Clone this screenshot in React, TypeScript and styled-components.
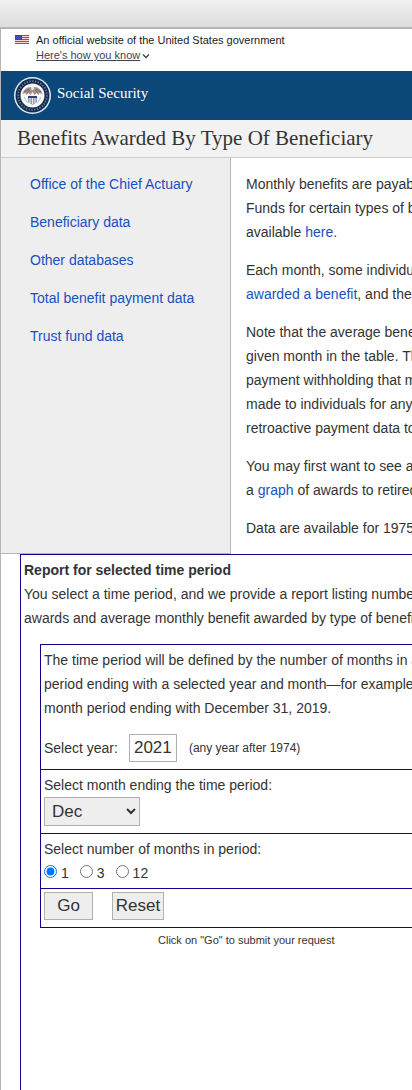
import React from "react";
import styled, { createGlobalStyle } from "styled-components";

const ink = "#333";
const rule = "#b5b5b5";
const navy = "#14008c";

const GlobalStyle = createGlobalStyle`
  *, *::before, *::after { box-sizing: border-box; }
  body {
    margin: 0;
    background: #fff;
    color: ${ink};
    font: 14px/24px "Liberation Sans", Arial, sans-serif;
  }
  p { margin: 0; }
`;

const Page = styled.div`
  display: flex;
  flex-direction: column;
  min-height: 100vh;
  overflow: hidden;
`;

const TopShade = styled.div`
  height: 29px;
  background: linear-gradient(#f0f0f0, #dcdcdc);
  border-bottom: 2px solid ${rule};
`;

const Sheet = styled.div`
  flex: 1;
  display: flex;
  flex-direction: column;
  border-left: 1px solid ${rule};
`;

const Banner = styled.section`
  display: flex;
  gap: 7px;
  padding: 4px 14px 7px;
  height: 42px;
  color: #1b1b1b;
  font-size: 11px;
  line-height: 15px;
`;

const Flag = styled.svg`
  width: 14px;
  height: 9px;
  margin-top: 2px;
`;

const BannerToggle = styled.button`
  display: flex;
  align-items: center;
  gap: 2px;
  padding: 0;
  border: 0;
  background: none;
  color: #3d4551;
  font: inherit;
  cursor: pointer;
  span { text-decoration: underline; }
`;

const Masthead = styled.header`
  display: flex;
  align-items: center;
  height: 49px;
  padding: 0 12px;
  background: #0b4778;
`;

const HomeLink = styled.a`
  display: flex;
  align-items: center;
  gap: 5px;
  color: #fff;
  font: 15px/20px "Liberation Serif", "Times New Roman", serif;
  text-decoration: none;
  span { padding-bottom: 5px; }
`;

const TitleBar = styled.div`
  padding: 0 16px;
  background: #f2f2f2;
  border-bottom: 1px solid #ccc;
`;

const Title = styled.h1`
  margin: 0;
  font: 21px/37px "Liberation Serif", "Times New Roman", serif;
  white-space: nowrap;
`;

const Columns = styled.div`
  display: flex;
`;

const Sidebar = styled.nav`
  flex: 0 0 230px;
  padding: 14px 29px;
  background: #eee;
  border-right: 1px solid ${rule};
  border-bottom: 1px solid ${rule};
  ul {
    display: flex;
    flex-direction: column;
    gap: 14px;
    margin: 0;
    padding: 0;
    list-style: none;
  }
`;

const Link = styled.a`
  color: #1a4fc0;
  text-decoration: none;
`;

const Intro = styled.main`
  flex: 1;
  min-width: 0;
  display: flex;
  flex-direction: column;
  gap: 14px;
  padding: 14px 0 14px 15px;
  white-space: nowrap;
`;

const Report = styled.section`
  flex: 1;
  margin-left: 19px;
  padding: 3px 0 3px 3px;
  border: 1px solid ${navy};
  border-width: 1px 0 0 1px;
  white-space: nowrap;
`;

const ReportHeading = styled.h2`
  margin: 0;
  font-size: 14px;
  line-height: 24px;
`;

const Form = styled.form`
  margin: 14px 0 0 16px;
`;

const Panel = styled.div`
  border: 1px solid ${navy};
  border-width: 1px 0 0 1px;
`;

const Row = styled.div`
  padding: 3px 3px 7px;
  border-bottom: 1px solid ${navy};
`;

const YearLine = styled.div`
  display: flex;
  align-items: center;
  margin-top: 14px;
`;

const YearInput = styled.input`
  width: 48px;
  height: 28px;
  margin: 0 12px 0 11px;
  padding: 0 4px;
  border: 1px solid #b0b0b0;
  background: #fff;
  color: ${ink};
  font: 17px "Liberation Sans", Arial, sans-serif;
`;

const Note = styled.span`
  font-size: 12px;
`;

const FieldLabel = styled.label`
  display: block;
`;

const MonthSelect = styled.select`
  display: block;
  width: 96px;
  height: 29px;
  padding: 0 0 0 3px;
  border: 1px solid #b0b0b0;
  border-radius: 0;
  background: #eee;
  color: ${ink};
  font: 17px "Liberation Sans", Arial, sans-serif;
`;

const Choices = styled.fieldset`
  margin: 0;
  padding: 3px;
  border: 0;
  border-bottom: 1px solid ${navy};
  legend {
    float: left;
    width: 100%;
    padding: 0;
  }
`;

const ChoiceList = styled.div`
  display: flex;
  clear: both;
  gap: 11px;
`;

const Choice = styled.label`
  display: flex;
  gap: 4px;
  input {
    width: 13px;
    height: 13px;
    margin: 4px 0 0;
  }
`;

const Buttons = styled(Row)`
  display: flex;
  gap: 19px;
`;

const Button = styled.button<{ $width: number }>`
  width: ${(p) => p.$width}px;
  height: 28px;
  padding: 0;
  border: 1px solid #b0b0b0;
  background: #eee;
  color: ${ink};
  font: 17px "Liberation Sans", Arial, sans-serif;
`;

const Hint = styled.p`
  padding-left: 118px;
  font-size: 11px;
`;

const navLinks = [
  "Office of the Chief Actuary",
  "Beneficiary data",
  "Other databases",
  "Total benefit payment data",
  "Trust fund data",
];

const months = ["Jan", "Feb", "Mar", "Apr", "May", "Jun", "Jul", "Aug", "Sep", "Oct", "Nov", "Dec"];

function Seal() {
  return (
    <svg width="39" height="39" viewBox="0 0 39 39" aria-hidden="true">
      <circle cx="19.5" cy="19.5" r="18.5" fill="#d9eefa" />
      <circle cx="19.5" cy="19.5" r="17" fill="#152c50" />
      <circle cx="19.5" cy="19.5" r="14.4" fill="none" stroke="#6f84a2" strokeWidth="1.8" strokeDasharray="1.2 1.6" />
      <circle cx="19.5" cy="19.5" r="12" fill="#f7f7f5" />
      <path d="M9.5 18c1-4 4-7 8-7l2 1.500 2-1.500c4 0 7 3 8 7l-3-1-1 2-2-2-2 2-2-3-2 3-2-2-2 2-1-2z" fill="#a8918a" />
      <path d="M11 16l5-3M28 16l-5-3M14 17l3-3M25 17l-3-3" stroke="#665d63" strokeWidth=".8" />
      <circle cx="19.500" cy="12.500" r="1.500" fill="#eee2d8" />
      <path d="M15 20h9v6l-4.500 3-4.500-3z" fill="#8ba1c2" />
      <path d="M15 20h9v2h-9z" fill="#294673" />
      <path d="M17 22v5M19.500 22v6M22 22v5" stroke="#f2e5e2" strokeWidth="1" />
      <path d="M11.500 21c.5 3 2 5 4 6M27.500 21c-.5 3-2 5-4 6" fill="none" stroke="#b9c4c6" />
    </svg>
  );
}

export default function App() {
  return (
    <>
      <GlobalStyle />
      <Page>
        <TopShade />
        <Sheet>
          <Banner>
            <Flag viewBox="0 0 14 9" aria-hidden="true">
              <rect width="14" height="9" fill="#f6d5d5" />
              {[0, 2, 4, 6, 8].map((y) => (
                <rect key={y} y={y} width="14" height="1" fill="#e0352b" />
              ))}
              <rect width="7" height="5" fill="#2b46a8" />
              <path fill="none" stroke="#8f9ce0" strokeWidth=".5" strokeDasharray=".6 1" d="M.7 1.200h6M1.200 2.500h5M.7 3.800h6" />
            </Flag>
            <div>
              <p>An official website of the United States government</p>
              <BannerToggle type="button">
                <span>Here's how you know</span>
                <svg width="8" height="8" viewBox="0 0 8 8" aria-hidden="true">
                  <path d="M1 2.500l3 3 3-3" fill="none" stroke="currentColor" strokeWidth="1.400" />
                </svg>
              </BannerToggle>
            </div>
          </Banner>
          <Masthead>
            <HomeLink href="#">
              <Seal />
              <span>Social Security</span>
            </HomeLink>
          </Masthead>
          <TitleBar>
            <Title>Benefits Awarded By Type Of Beneficiary</Title>
          </TitleBar>
          <Columns>
            <Sidebar>
              <ul>
                {navLinks.map((text) => (
                  <li key={text}>
                    <Link href="#">{text}</Link>
                  </li>
                ))}
              </ul>
            </Sidebar>
            <Intro>
              <p>
                Monthly benefits are payable
                <br />
                Funds for certain types of benefits
                <br />
                available <Link href="#">here.</Link>
              </p>
              <p>
                Each month, some individuals
                <br />
                <Link href="#">awarded a benefit</Link>, and the
              </p>
              <p>
                Note that the average benefit
                <br />
                given month in the table. The
                <br />
                payment withholding that may
                <br />
                made to individuals for any
                <br />
                retroactive payment data to
              </p>
              <p>
                You may first want to see a
                <br />a <Link href="#">graph</Link> of awards to retired
              </p>
              <p>Data are available for 1975</p>
            </Intro>
          </Columns>
          <Report>
            <ReportHeading>Report for selected time period</ReportHeading>
            <p>
              You select a time period, and we provide a report listing number
              <br />
              awards and average monthly benefit awarded by type of beneficiary
            </p>
            <Form onSubmit={(e) => e.preventDefault()}>
              <Panel>
                <Row>
                  <p>
                    The time period will be defined by the number of months in a
                    <br />
                    period ending with a selected year and month—for example,
                    <br />
                    month period ending with December 31, 2019.
                  </p>
                  <YearLine>
                    <label htmlFor="year">Select year:</label>
                    <YearInput id="year" type="text" defaultValue="2021" />
                    <Note>(any year after 1974)</Note>
                  </YearLine>
                </Row>
                <Row>
                  <FieldLabel htmlFor="month">Select month ending the time period:</FieldLabel>
                  <MonthSelect id="month" defaultValue="Dec">
                    {months.map((m) => (
                      <option key={m}>{m}</option>
                    ))}
                  </MonthSelect>
                </Row>
                <Choices>
                  <legend>Select number of months in period:</legend>
                  <ChoiceList>
                    {["1", "3", "12"].map((n) => (
                      <Choice key={n}>
                        <input type="radio" name="span" value={n} defaultChecked={n === "1"} />
                        {n}
                      </Choice>
                    ))}
                  </ChoiceList>
                </Choices>
                <Buttons>
                  <Button type="submit" $width={49}>Go</Button>
                  <Button type="reset" $width={52}>Reset</Button>
                </Buttons>
              </Panel>
              <Hint>Click on "Go" to submit your request</Hint>
            </Form>
          </Report>
        </Sheet>
      </Page>
    </>
  );
}
